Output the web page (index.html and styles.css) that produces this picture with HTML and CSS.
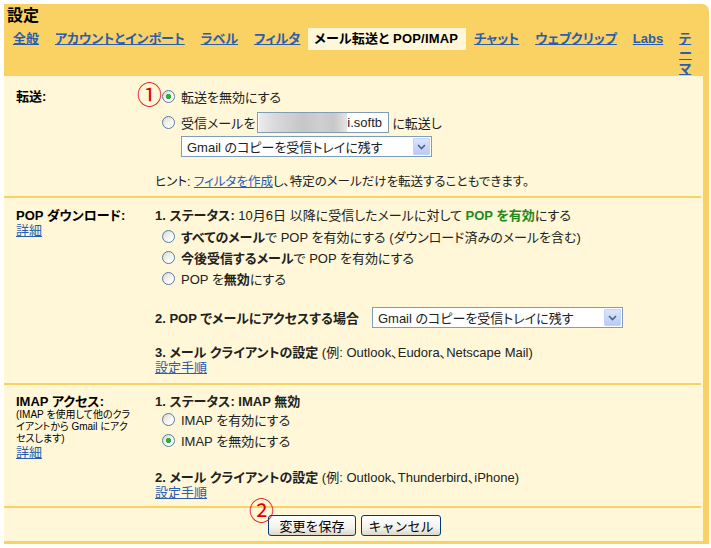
FILE: index.html
```html
<!DOCTYPE html>
<html lang="ja">

<head>
    <meta charset="UTF-8">
    <title>設定 - メール転送と POP/IMAP</title>
    <link rel="stylesheet" href="styles.css">
</head>

<body>

    <div class="settings">

        <div class="header">
            <h1 class="title">設定</h1>
            <div class="tabs">
                <a class="tab" href="#">全般</a>
                <a class="tab" href="#">アカウントとインポート</a>
                <a class="tab" href="#">ラベル</a>
                <a class="tab" href="#">フィルタ</a>
                <span class="tab selected">メール転送と POP/IMAP</span>
                <a class="tab" href="#">チャット</a>
                <a class="tab" href="#">ウェブクリップ</a>
                <a class="tab" href="#">Labs</a>
                <a class="tab narrow" href="#">テーマ</a>
            </div>
        </div>

        <div class="content">

            <!-- 転送 -->
            <div class="row fwd">
                <div class="label"><b>転送:</b></div>
                <div class="value">
                    <span class="mark mark1">①</span>
                    <label class="opt"><input type="radio" name="fwd" checked>転送を無効にする</label>
                    <label class="opt opt-input"><input type="radio" name="fwd">受信メールを
                        <span class="textbox"><span class="blur"></span>i.softb</span>
                        に転送し</label>
                    <div class="select fwd-select">
                        <span class="select-text">Gmail のコピーを受信トレイに残す</span>
                        <span class="select-arrow"><svg width="9" height="6" viewBox="0 0 9 6"><path d="M1 1 L4.5 4.5 L8 1" fill="none" stroke="#4d6185" stroke-width="1.6"/></svg></span>
                    </div>
                    <p class="hint">ヒント: <a href="#">フィルタを作成</a>し、特定のメールだけを転送することもできます。</p>
                </div>
            </div>

            <!-- POP -->
            <div class="row pop">
                <div class="label">
                    <b>POP ダウンロード:</b><br>
                    <a href="#">詳細</a>
                </div>
                <div class="value">
                    <div class="line"><b>1. ステータス:</b> 10月6日 以降に受信したメールに対して <b class="on">POP を有効</b>にする</div>
                    <div class="opts">
                        <label class="opt"><input type="radio" name="pop"><b>すべてのメール</b>で POP を有効にする (ダウンロード済みのメールを含む)</label>
                        <label class="opt"><input type="radio" name="pop"><b>今後受信するメール</b>で POP を有効にする</label>
                        <label class="opt"><input type="radio" name="pop">POP を<b>無効</b>にする</label>
                    </div>
                    <div class="access">
                        <b>2. POP でメールにアクセスする場合</b>
                        <div class="select pop-select">
                            <span class="select-text">Gmail のコピーを受信トレイに残す</span>
                            <span class="select-arrow"><svg width="9" height="6" viewBox="0 0 9 6"><path d="M1 1 L4.5 4.5 L8 1" fill="none" stroke="#4d6185" stroke-width="1.6"/></svg></span>
                        </div>
                    </div>
                    <div class="line client"><b>3. メール クライアントの設定</b> (例: Outlook、Eudora、Netscape Mail)</div>
                    <div class="line"><a href="#">設定手順</a></div>
                </div>
            </div>

            <!-- IMAP -->
            <div class="row imap">
                <div class="label">
                    <b>IMAP アクセス:</b>
                    <div class="small">(IMAP を使用して他のクラ<br>イアントから Gmail にアク<br>セスします)</div>
                    <a href="#">詳細</a>
                </div>
                <div class="value">
                    <div class="line"><b>1. ステータス: IMAP 無効</b></div>
                    <label class="opt"><input type="radio" name="imap">IMAP を有効にする</label>
                    <label class="opt"><input type="radio" name="imap" checked>IMAP を無効にする</label>
                    <div class="line client"><b>2. メール クライアントの設定</b> (例: Outlook、Thunderbird、iPhone)</div>
                    <div class="line"><a href="#">設定手順</a></div>
                </div>
            </div>

            <div class="row actions">
                <span class="mark mark2">②</span>
                <button class="btn save">変更を保存</button>
                <button class="btn cancel">キャンセル</button>
            </div>

        </div>
    </div>

</body>

</html>
```

FILE: styles.css
```css
body {
    margin: 0;
    background-color: #ffffff;
    font-family: "Liberation Sans", "Noto Sans CJK JP", sans-serif;
    font-size: 13px;
    color: #222222;
    font-feature-settings: "palt";
}

a {
    color: #2a5db0;
}

.settings {
    width: 705px;
    margin: 4px 0 0 4px;
}

/* header + tabs */

.header {
    background-color: #fad163;
    border-top-right-radius: 7px;
    padding-top: 2px;
}

.title {
    margin: 0;
    padding-left: 3px;
    font-size: 16px;
    line-height: 20px;
    font-weight: bold;
    color: #000000;
}

.tabs {
    display: flex;
    align-items: flex-start;
    margin-top: 2px;
    padding-left: 1px;
}

.tab {
    padding: 3px 8px 4px;
    line-height: 15px;
    font-weight: bold;
    white-space: nowrap;
}

.tab.selected {
    background-color: #fff7d7;
    color: #000000;
    padding-left: 6px;
    letter-spacing: 0.2px;
}

.tab.narrow {
    width: 13px;
    white-space: normal;
    padding-bottom: 0;
}

/* content */

.content {
    background-color: #fff7d7;
    border-right: 6px solid #fad163;
    border-bottom: 3px solid #fad163;
}

.row {
    position: relative;
    display: grid;
    grid-template-columns: 151px 1fr;
    border-bottom: 2px solid #fad163;
    margin-right: 2px;
}

.label {
    padding-left: 12px;
    line-height: 15px;
    color: #000000;
}

.line {
    line-height: 15px;
}

.opt {
    display: flex;
    align-items: center;
    height: 21px;
    white-space: nowrap;
}

.opt input {
    appearance: none;
    -webkit-appearance: none;
    width: 13px;
    height: 13px;
    margin: 0 6px 0 7px;
    border: 1px solid #557ba3;
    border-radius: 50%;
    background: linear-gradient(135deg, #d8d8d2, #ffffff 75%);
}

.opt input:checked {
    background: radial-gradient(circle, #2bb12b 0 2.3px, transparent 3px), linear-gradient(135deg, #d8d8d2, #ffffff 75%);
}

.on {
    color: #1d8a1d;
}

/* 転送 */

.fwd {
    padding: 10px 0 6px;
}

.fwd .label {
    padding-top: 3px;
}

.opt-input {
    margin-top: 4px;
    height: 23px;
}

.textbox {
    display: inline-flex;
    align-items: center;
    width: 130px;
    height: 19px;
    margin: 0 3px 0 2px;
    border: 1px solid #7f9db9;
    background-color: #ffffff;
    overflow: hidden;
    color: #222222;
}

.blur {
    display: inline-block;
    width: 88px;
    height: 19px;
    margin-left: 1px;
    background: linear-gradient(to right, #ececec, #dcdcdc 15%, #d2d2d2 30%, #c6c6c6 50%, #cfcfcf 70%, #c8c8c8 85%, #e4e4e4);
}

.select {
    display: flex;
    align-items: center;
    justify-content: space-between;
    width: 249px;
    height: 19px;
    border: 1px solid #7f9db9;
    background-color: #ffffff;
    white-space: nowrap;
}

.select-text {
    padding-left: 5px;
    color: #222222;
}

.select-arrow {
    display: flex;
    align-items: center;
    justify-content: center;
    width: 15px;
    height: 15px;
    margin-right: 1px;
    border: 1px solid #c3d3fd;
    border-radius: 1px;
    background: linear-gradient(#dbe5fb, #b9cbf3);
}

.fwd-select {
    margin: 2px 0 0 26px;
}

.hint {
    margin: 18px 0 0;
    font-size: 12.5px;
    line-height: 15px;
}

/* POP */

.pop {
    padding: 10px 0 8px;
}

.opts {
    margin-top: 3px;
}

.access {
    display: flex;
    align-items: center;
    margin-top: 18px;
    height: 21px;
}

.pop-select {
    margin-left: 13px;
}

.pop .client {
    margin-top: 17px;
}

/* IMAP */

.imap {
    padding: 9px 0 6px;
}

.small {
    font-size: 10px;
    line-height: 12px;
}

.imap .client {
    margin-top: 19px;
}

/* buttons */

.row.actions {
    display: flex;
    justify-content: center;
    gap: 5px;
    padding: 7px 0 5px 4px;
    border-bottom: none;
}

.btn {
    height: 21px;
    padding: 0;
    border: 1px solid #003c74;
    border-radius: 3px;
    background: linear-gradient(#ffffff, #f3f2ec 60%, #dcd7cb);
    font-family: "Liberation Sans", "Noto Sans CJK JP", sans-serif;
    font-size: 13px;
    color: #000000;
}

.save {
    width: 88px;
}

.cancel {
    width: 80px;
}

/* red annotation marks */

.mark {
    position: absolute;
    font-family: "Noto Sans CJK JP", sans-serif;
    font-size: 25px;
    line-height: 25px;
    color: #e00000;
    z-index: 2;
}

.mark1 {
    left: 133px;
    top: 5px;
}

.mark2 {
    left: 245px;
    top: -11px;
}
```
